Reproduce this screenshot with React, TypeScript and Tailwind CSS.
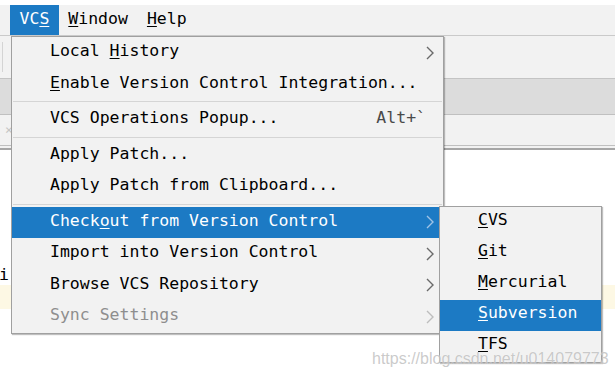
import React from "react";

type Item =
  | { sep: true }
  | {
      sep?: false;
      label: string;
      u?: number;
      arrow?: boolean;
      shortcut?: string;
      active?: boolean;
      disabled?: boolean;
    };

const mainItems: Item[] = [
  { label: "Local History", u: 6, arrow: true },
  { label: "Enable Version Control Integration...", u: 0 },
  { sep: true },
  { label: "VCS Operations Popup...", shortcut: "Alt+`" },
  { sep: true },
  { label: "Apply Patch..." },
  { label: "Apply Patch from Clipboard..." },
  { sep: true },
  { label: "Checkout from Version Control", u: 5, arrow: true, active: true },
  { label: "Import into Version Control", arrow: true },
  { label: "Browse VCS Repository", arrow: true },
  { label: "Sync Settings", arrow: true, disabled: true },
];

const subItems = [
  { label: "CVS", active: false },
  { label: "Git", active: false },
  { label: "Mercurial", active: false },
  { label: "Subversion", active: true },
  { label: "TFS", active: false },
];

function Mnemonic({ text, u }: { text: string; u?: number }) {
  if (u === undefined) return <>{text}</>;
  return (
    <>
      {text.slice(0, u)}
      <span className="underline decoration-1 underline-offset-[2px]">{text[u]}</span>
      {text.slice(u + 1)}
    </>
  );
}

function Chevron({ color }: { color: string }) {
  return (
    <svg width="8" height="14" viewBox="0 0 8 14" className="shrink-0">
      <polyline points="1,1 7,7 1,13" fill="none" stroke={color} strokeWidth="1.4" />
    </svg>
  );
}

export default function App() {
  return (
    <div className="relative w-[615px] h-[378px] overflow-hidden bg-white font-['DejaVu_Sans_Mono',monospace] text-[16.5px] text-black">
      {/* window background */}
      <div className="h-[5px] bg-white" />
      <div className="flex h-[31px] bg-[#f2f2f2] pl-[10px] border-b border-[#cacaca]">
        <div className="flex items-center px-[9.5px] bg-[#1c7ac4] text-white">
          <span className="mb-[2px]">
            VC<span className="underline decoration-1 underline-offset-[2px]">S</span>
          </span>
        </div>
        <div className="flex items-center px-[9.5px]">
          <span className="mb-[2px]">
            <Mnemonic text="Window" u={0} />
          </span>
        </div>
        <div className="flex items-center px-[9.5px]">
          <span className="mb-[2px]">
            <Mnemonic text="Help" u={0} />
          </span>
        </div>
      </div>
      <div className="h-[43px] bg-[#f2f2f2] border-b border-[#c4c4c4] flex items-center pl-[2px]">
        <div className="w-px h-[30px] bg-[#d4d4d4]" />
      </div>
      <div className="h-[36px] bg-[#dcdcdc] border-b border-[#c0c0c0]" />
      <div className="h-[31px] bg-[#f2f2f2] border-b border-[#c0c0c0] flex items-center pl-[5px] text-[#c4c4c4] text-[13px]">
        ×
      </div>
      <div className="h-[4px] bg-[#f2f2f2] border-b-2 border-[#a6a6a6]" />
      <div className="h-[134px] bg-white flex items-end">
        <span className="-ml-[1px] leading-[18px]">ir</span>
      </div>
      <div className="h-[24px] mt-[1px] bg-[#fdf8e4]" />

      {/* VCS menu */}
      <div className="absolute left-[11px] top-[36px] w-[433px] bg-[#f2f2f2] border border-[#a0a0a0] shadow-[1px_1px_1px_rgba(0,0,0,0.25)]">
        {mainItems.map((it, i) =>
          it.sep ? (
            <div key={i} className="h-[4px] pt-[1px] px-[1px]">
              <div className="h-px bg-[#d5d5d5]" />
            </div>
          ) : (
            <div
              key={i}
              className={`flex items-center h-[31.5px] pl-[38px] pr-[9px] ${
                it.active ? "bg-[#1c7ac4] text-white" : it.disabled ? "text-[#8e8e8e]" : ""
              }`}
            >
              <span className="flex-1 mb-[2px] whitespace-pre">
                <Mnemonic text={it.label} u={it.u} />
              </span>
              {it.shortcut && <span className="mb-[2px] mr-[8px] text-[#4a4a4a]">{it.shortcut}</span>}
              {it.arrow && (
                <Chevron color={it.active ? "#9fc3e6" : it.disabled ? "#bdbdbd" : "#6a6a6a"} />
              )}
            </div>
          )
        )}
      </div>

      {/* Checkout submenu */}
      <div className="absolute left-[439px] top-[206px] w-[163px] bg-[#f2f2f2] border border-[#a0a0a0] shadow-[1px_1px_1px_rgba(0,0,0,0.25)]">
        {subItems.map((it) => (
          <div
            key={it.label}
            className={`flex items-center h-[31px] pl-[38px] ${it.active ? "bg-[#1c7ac4] text-white" : ""}`}
          >
            <span className="mb-[4px]">
              <Mnemonic text={it.label} u={0} />
            </span>
          </div>
        ))}
      </div>

      {/* watermark */}
      <div className="absolute left-[372px] top-[351px] leading-none text-[16px] font-['Liberation_Sans',Arial,sans-serif] text-[rgba(150,150,150,0.5)] [text-shadow:0_0_1px_rgba(255,255,255,0.9)]">
        https://blog.csdn.net/u014079773
      </div>
    </div>
  );
}
